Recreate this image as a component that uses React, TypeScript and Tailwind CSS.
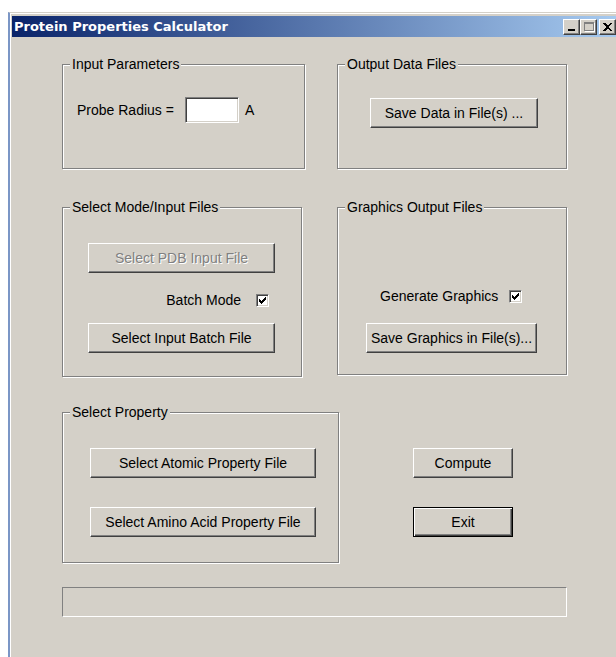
import type { ReactNode } from "react";

const raised =
  "border border-t-white border-l-white border-r-[#404040] border-b-[#404040] bg-[#D4D0C8] shadow-[inset_-1px_-1px_0_#808080]";
const sunken =
  "border border-t-[#808080] border-l-[#808080] border-r-white border-b-white shadow-[inset_1px_1px_0_#404040,inset_-1px_-1px_0_#D4D0C8]";

const Button = ({
  children,
  className = "",
  disabled = false,
  primary = false,
}: {
  children: ReactNode;
  className?: string;
  disabled?: boolean;
  primary?: boolean;
}) => (
  <button
    disabled={disabled}
    className={`flex h-[30px] items-center justify-center text-[14px] leading-[16px] ${
      primary
        ? "border border-black bg-[#D4D0C8] shadow-[inset_1px_1px_0_#fff,inset_-1px_-1px_0_#404040,inset_-2px_-2px_0_#808080]"
        : raised
    } ${disabled ? "text-[#808080] [text-shadow:1px_1px_0_#fff]" : "text-black"} ${className}`}
  >
    {children}
  </button>
);

const Group = ({
  title,
  className = "",
  children,
}: {
  title: string;
  className?: string;
  children?: ReactNode;
}) => (
  <div
    className={`relative border border-[#808080] shadow-[1px_1px_0_#fff,inset_1px_1px_0_#fff] ${className}`}
  >
    <span className="absolute -top-[9px] left-[7px] bg-[#D4D0C8] px-[2px] text-[14px] leading-[16px] text-black">
      {title}
    </span>
    {children}
  </div>
);

const Check = () => (
  <span className={`flex h-[13px] w-[13px] items-center justify-center bg-white ${sunken}`}>
    <svg width="7" height="7" viewBox="0 0 7 7" shapeRendering="crispEdges">
      <path d="M0 2h1v1h1v1h1v-1h1v-1h1v-1h1v-1h1v3h-1v1h-1v1h-1v1h-1v1h-1v-1h-1v-1h-1z" fill="#000" />
    </svg>
  </span>
);

const CaptionButton = ({ children, className = "" }: { children: ReactNode; className?: string }) => (
  <div className={`flex h-[16px] w-[17px] items-center justify-center ${raised} ${className}`}>{children}</div>
);

export default function App() {
  return (
    <div className="h-[657px] w-[616px] overflow-hidden bg-white pl-[8px] pt-[12px] font-['Liberation_Sans',Arial,sans-serif]">
      <div className="flex h-[645px] w-[608px] flex-col border-t border-l-2 border-t-[#D4D0C8] border-l-[#7b96c6] bg-[#D4D0C8] pl-[2px] pt-[3px] shadow-[inset_1px_1px_0_#fff]">
        {/* caption */}
        <div className="flex h-[21px] shrink-0 items-center bg-[linear-gradient(to_right,#0A246A,#A6CAF0)] pl-[2px]">
          <span className="font-['DejaVu_Sans',sans-serif] text-[13px] font-bold leading-[16px] text-white">
            Protein Properties Calculator
          </span>
          <div className="ml-auto flex items-center">
            <CaptionButton>
              <div className="mt-[7px] h-[2px] w-[7px] bg-black" />
            </CaptionButton>
            <CaptionButton>
              <div className="h-[9px] w-[10px] border border-t-2 border-[#808080] shadow-[1px_1px_0_#fff]" />
            </CaptionButton>
            <CaptionButton className="ml-[2px]">
              <svg width="9" height="8" viewBox="0 0 9 8" shapeRendering="crispEdges">
                <path d="M0 0h2l2.5 2.5l2.5-2.5h2l-3.5 4l3.5 4h-2l-2.5-2.5l-2.5 2.5h-2l3.5-4z" fill="#000" />
              </svg>
            </CaptionButton>
          </div>
        </div>

        {/* dialog body */}
        <div className="flex flex-col pl-[50px] pt-[27px] text-[14px] leading-[16px] text-black">
          <div className="flex items-start">
            <Group title="Input Parameters" className="h-[105px] w-[243px]">
              <div className="flex items-center pl-[14px] pt-[32px]">
                <span>Probe Radius =</span>
                <div className={`ml-[11px] h-[26px] w-[54px] bg-white ${sunken}`} />
                <span className="ml-[6px]">A</span>
              </div>
            </Group>
            <Group title="Output Data Files" className="ml-[32px] h-[105px] w-[230px]">
              <div className="pl-[32px] pt-[33px]">
                <Button className="w-[168px]">Save Data in File(s) ...</Button>
              </div>
            </Group>
          </div>

          <div className="mt-[38px] flex items-start">
            <Group title="Select Mode/Input Files" className="flex h-[170px] w-[240px] flex-col pl-[25px] pt-[35px]">
              <Button disabled className="w-[187px]">
                Select PDB Input File
              </Button>
              <div className="mr-[32px] mt-[19px] flex items-center gap-[15px] self-end">
                <span>Batch Mode</span>
                <Check />
              </div>
              <Button className="mt-[15px] w-[187px]">Select Input Batch File</Button>
            </Group>
            <Group title="Graphics Output Files" className="ml-[35px] flex h-[168px] w-[230px] flex-col pt-[80px]">
              <div className="ml-[42px] flex items-center gap-[11px]">
                <span>Generate Graphics</span>
                <Check />
              </div>
              <Button className="ml-[28px] mt-[19px] w-[171px]">Save Graphics in File(s)...</Button>
            </Group>
          </div>

          <div className="mt-[35px] flex items-start">
            <Group title="Select Property" className="flex h-[151px] w-[277px] flex-col gap-[29px] pl-[27px] pt-[35px]">
              <Button className="w-[226px]">Select Atomic Property File</Button>
              <Button className="w-[226px]">Select Amino Acid Property File</Button>
            </Group>
            <div className="ml-[74px] flex flex-col gap-[29px] pt-[36px]">
              <Button className="w-[100px]">Compute</Button>
              <Button primary className="w-[100px]">
                Exit
              </Button>
            </div>
          </div>

          <div className="mt-[24px] h-[30px] w-[505px] border border-t-[#808080] border-l-[#808080] border-r-white border-b-white" />
        </div>
      </div>
    </div>
  );
}
